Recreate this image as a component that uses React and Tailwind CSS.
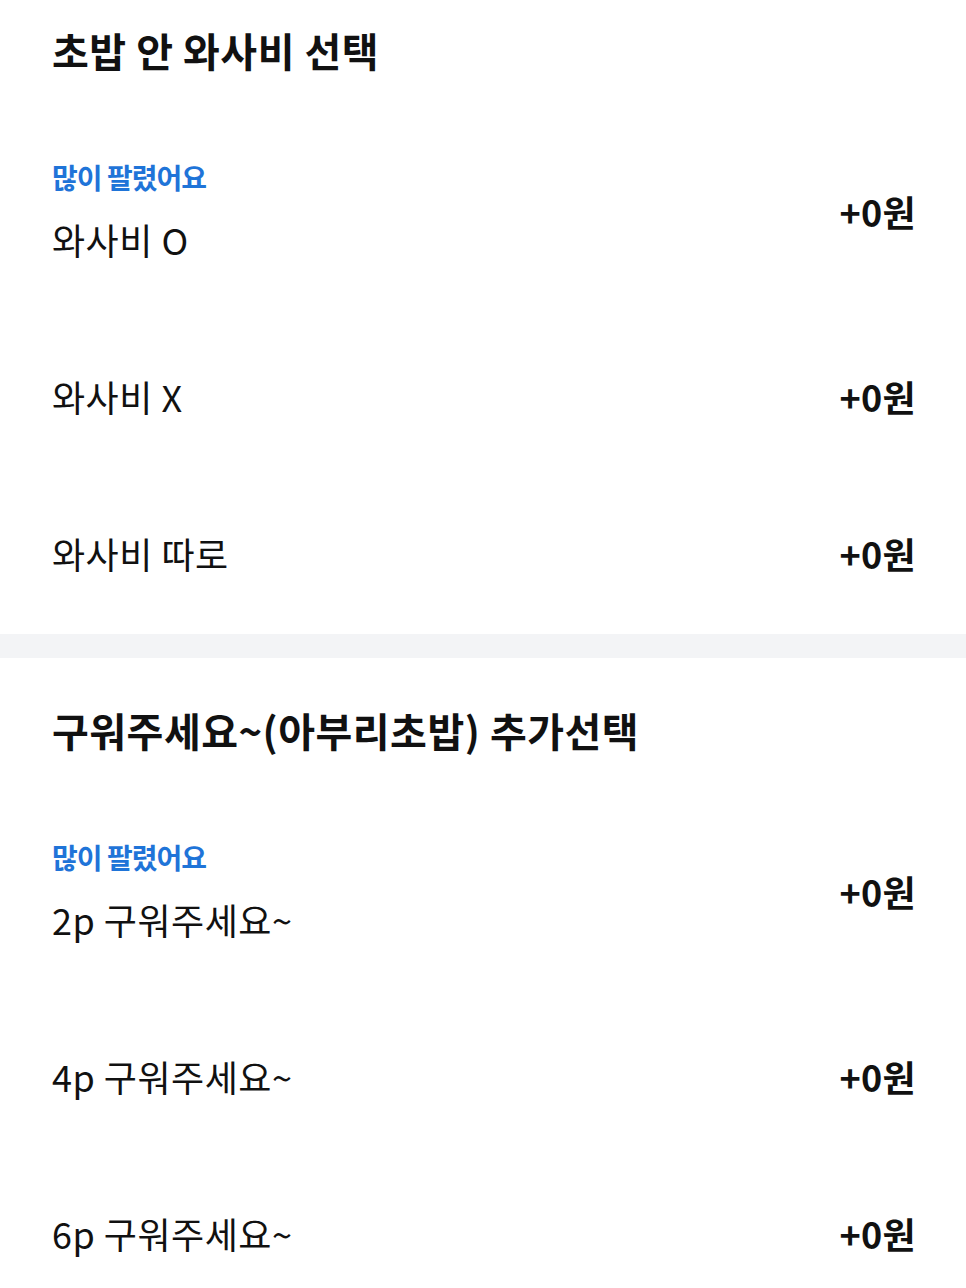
import React from 'react';

const sections = [
  {
    title: "초밥 안 와사비 선택",
    top: "pt-[26px]",
    options: [
      { name: "와사비 O", price: "+0원", best: true },
      { name: "와사비 X", price: "+0원" },
      { name: "와사비 따로", price: "+0원" },
    ],
  },
  {
    title: "구워주세요~(아부리초밥) 추가선택",
    top: "pt-[48px]",
    options: [
      { name: "2p 구워주세요~", price: "+0원", best: true },
      { name: "4p 구워주세요~", price: "+0원" },
      { name: "6p 구워주세요~", price: "+0원" },
    ],
  },
];

const OptionRow = ({ option }) => (
  <div className="flex items-center justify-between py-[54.5px]">
    <div className="flex flex-col gap-[20px]">
      {option.best && (
        <span className="text-[28px] leading-[36px] font-bold text-[#1f74d8] tracking-[-1px]">많이 팔렸어요</span>
      )}
      <span className="text-[36px] leading-[48px] text-[#111111] tracking-[0.5px]">{option.name}</span>
    </div>
    <span className="text-[36px] leading-[48px] font-bold text-[#111111] tracking-[0.3px] -mr-[2px]">{option.price}</span>
  </div>
);

const App = () => {
  return (
    <div
      className="min-h-screen bg-white"
      style={{ fontFamily: '"Noto Sans CJK KR", "Noto Sans", sans-serif' }}
    >
      {sections.map((section, i) => (
        <div key={i}>
          {i > 0 && <div className="h-[24px] bg-[#f3f4f6] mt-[3px]"></div>}
          <div className={`px-[52px] ${section.top}`}>
            <h2 className="text-[40px] leading-[48px] font-bold text-[#111111] tracking-[0.5px] mb-[30px]">{section.title}</h2>
            {section.options.map((option, j) => (
              <OptionRow key={j} option={option} />
            ))}
          </div>
        </div>
      ))}
    </div>
  );
};

export default App;
